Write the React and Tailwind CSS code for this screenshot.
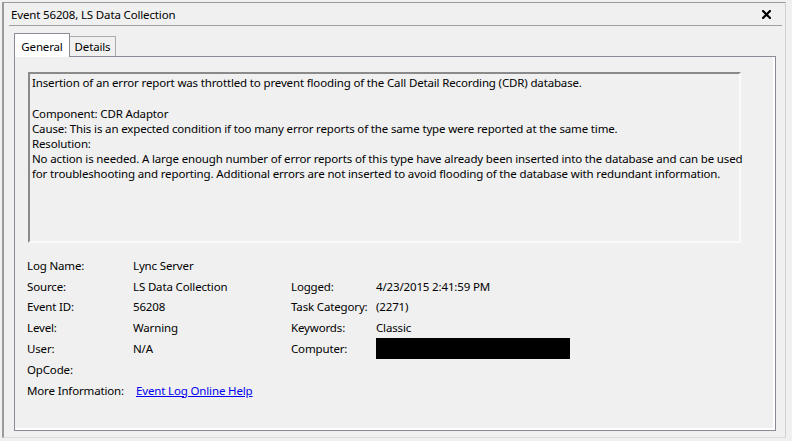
import React from "react";

const font = { fontFamily: '"Noto Sans", "Open Sans", sans-serif' };

function Row({ label, value, label2, value2, children }) {
  return (
    <>
      <div className="h-[20.8px] flex items-center whitespace-nowrap">{label}</div>
      <div className="h-[20.8px] flex items-center whitespace-nowrap">{children ?? value}</div>
      <div className="h-[20.8px] flex items-center whitespace-nowrap">{label2}</div>
      <div className="h-[20.8px] flex items-center whitespace-nowrap">{value2}</div>
    </>
  );
}

export default function App() {
  return (
    <div
      className="w-[792px] h-[441px] bg-[#f0f0f0] overflow-hidden text-[11.5px] tracking-[-0.15px] text-black leading-[15px]"
      style={font}
    >
      <div className="ml-[2px] mt-[2px] w-[784px] h-[436px] border-l-2 border-t border-[#9a9a9a] border-r border-r-[#d0d0d0] border-b border-b-[#dcdcdc] flex flex-col">
        {/* Title bar */}
        <div className="h-[22px] flex items-center justify-between pl-[7px] pr-[14px]">
          <span>Event 56208, LS Data Collection</span>
          <svg width="9" height="9" viewBox="0 0 9 9" className="mt-[1px]">
            <path d="M1 1 L8 8 M8 1 L1 8" stroke="#000" strokeWidth="2.2" strokeLinecap="square" />
          </svg>
        </div>
        <div className="ml-[5px] mr-[3px] h-px bg-[#a0a0a0]" />

        {/* Tabs */}
        <div className="ml-[10px] mt-[7px] flex items-end relative z-10">
          <div className="w-[56px] h-[24px] bg-white border border-b-0 border-[#898c95] flex items-center justify-center -mb-px pt-[1px]">
            General
          </div>
          <div className="w-[46px] h-[20px] bg-[#f0f0f0] border border-l-0 border-b-0 border-[#adadad] flex items-center justify-center">
            Details
          </div>
        </div>

        {/* Panel */}
        <div className="ml-[10px] w-[762px] h-[375px] border border-[#898c95]">
          <div className="w-full h-full border-r-2 border-b-2 border-white pl-[13px] pt-[15px]">
            {/* Description box */}
            <div className="w-[713px] h-[171px] border-t-2 border-l-2 border-t-[#8a8a8a] border-l-[#8a8a8a] border-r-2 border-b-2 border-r-[#fafafa] border-b-[#fafafa] pl-[2px] pt-[1px] whitespace-nowrap">
              <div>Insertion of an error report was throttled to prevent flooding of the Call Detail Recording (CDR) database.</div>
              <div className="h-[16px]" />
              <div>Component: CDR Adaptor</div>
              <div>Cause: This is an expected condition if too many error reports of the same type were reported at the same time.</div>
              <div>Resolution:</div>
              <div>No action is needed. A large enough number of error reports of this type have already been inserted into the database and can be used</div>
              <div>for troubleshooting and reporting. Additional errors are not inserted to avoid flooding of the database with redundant information.</div>
            </div>

            {/* Info grid */}
            <div className="mt-[12px] -ml-px grid grid-cols-[106px_158px_85px_1fr]">
              <Row label="Log Name:" value="Lync Server" />
              <Row label="Source:" value="LS Data Collection" label2="Logged:" value2="4/23/2015 2:41:59 PM" />
              <Row label="Event ID:" value="56208" label2="Task Category:" value2="(2271)" />
              <Row label="Level:" value="Warning" label2="Keywords:" value2="Classic" />
              <Row
                label="User:"
                value="N/A"
                label2="Computer:"
                value2={<div className="w-[194px] h-[21px] bg-black" />}
              />
              <Row label="OpCode:" value="" />
              <Row label="More Information:">
                <a href="#" className="ml-[3px] text-[#0000ee] underline">
                  Event Log Online Help
                </a>
              </Row>
            </div>
          </div>
        </div>
      </div>
    </div>
  );
}
